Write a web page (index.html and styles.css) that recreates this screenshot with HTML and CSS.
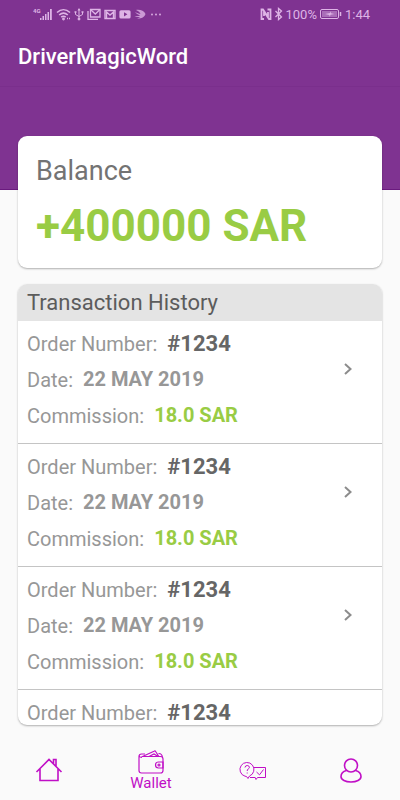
FILE: index.html
```html
<!DOCTYPE html>
<html lang="en">
<head>
<meta charset="UTF-8" />
<meta name="viewport" content="width=device-width, initial-scale=1"/>
<title>DriverMagicWord</title>
<link rel="stylesheet" href="styles.css">
</head>
<body>
  <header class="hero">
    <div class="status-bar">
      <div class="status-left">
        <svg width="20" height="14" viewBox="0 0 20 14" fill="currentColor"><text class="net" x="0" y="6">4G</text><path d="M7 11h1.500v2h-1.500zM9.500 9h1.500v4H9.500zM12 7h1.500v6H12zM14.500 5H16v8h-1.500zM17 2h1.800v11H17z"/></svg>
        <svg width="15" height="14" viewBox="0 0 15 14" fill="none" stroke="currentColor" stroke-width="1.600"><path d="M1 5.500C5 1.800 10 1.800 14 5.500M3.200 8C6 5.500 9 5.500 11.800 8M5.200 10.200c1.500-1.200 3-1.200 4.500 0"/><circle cx="7.500" cy="12" r=".6"/><path d="M11 11.500h3" stroke-dasharray="1 1"/></svg>
        <svg width="10" height="14" viewBox="0 0 10 14" fill="none" stroke="currentColor"><path d="M5 2v10M1.500 5v2.500L5 9.500l3.500-2V5"/><path d="M5 1l1.500 2.500h-3z" fill="currentColor" stroke="none"/><circle cx="5" cy="12" r="1" fill="currentColor"/><path d="M.5 5h2M7.500 5h2" stroke-width="1.500"/></svg>
        <svg width="14" height="14" viewBox="0 0 14 14" fill="none" stroke="currentColor" stroke-width="1.300"><path d="M1 4v8.300h10M3.500 2.500h9.500v7.500H3.500z"/><path d="M4 3l4.300 4L12.500 3"/></svg>
        <svg width="12" height="14" viewBox="0 0 12 14" fill="none" stroke="currentColor" stroke-width="1.400"><path d="M1 3.500h10v8H1z"/><path d="M2.500 11V5L6 8l3.500-3v6"/></svg>
        <svg width="12" height="14" viewBox="0 0 12 14" fill="currentColor" fill-rule="evenodd"><path d="M2 3.200h8q1.600 0 1.600 1.500v5.200q0 1.500-1.600 1.500H2Q.4 11.400.4 9.900V4.700Q.4 3.200 2 3.200zM5 5.200v4.200l3.400-2.100z"/></svg>
        <svg width="12" height="14" viewBox="0 0 12 14" fill="currentColor"><path d="M2 3c4-.6 8 .6 9.500 4-1 3.500-5 5-9 4.500 2-.5 3-1 3.500-1.500-2 .3-4 0-5.500-1 2.500.2 4.500 0 5.500-.8C4 8 2 6.500 1 5c2 1.200 4 1.800 5.500 1.800C5.500 5 4 3.800 2 3z" fill-opacity=".8"/></svg>
        <svg width="12" height="14" viewBox="0 0 12 14" fill="currentColor"><circle cx="3" cy="7.500" r=".9"/><circle cx="7" cy="7.500" r=".9"/><circle cx="11" cy="7.500" r=".9"/></svg>
      </div>
      <div class="status-right">
        <svg width="12" height="14" viewBox="0 0 12 14" fill="none" stroke="currentColor" stroke-width="1.800"><path d="M4 12H1.500V2.500H3l5 7.500V5M7.500 2.500h3V12H9L4 4.500V9"/></svg>
        <svg width="9" height="14" viewBox="0 0 9 14" fill="none" stroke="currentColor" stroke-width="1.300"><path d="M1.500 4l6 6L4.500 12.500V1.500L7.500 4l-6 6"/></svg>
        <span>100%</span>
        <svg class="battery" width="22" height="14" viewBox="0 0 22 14" fill="none" stroke="currentColor"><rect x=".5" y="2.500" width="18" height="9" rx="1.500"/><rect x="2" y="4" width="15" height="6" fill="currentColor" fill-opacity=".45" stroke="none"/><path d="M20.500 5v4" stroke-width="1.500"/><path d="M5 7l5-1 .5-1.700.5 1.900 3.500.8-4 .8-.7 1.900-.6-1.700z" fill="currentColor" stroke="none"/></svg>
        <time>1:44</time>
      </div>
    </div>
    <h1 class="app-title">DriverMagicWord</h1>
  </header>

  <main class="content">
    <section class="card balance">
      <h2 class="balance-label">Balance</h2>
      <p class="balance-amount">+400000 SAR</p>
    </section>

    <section class="card history">
      <h2 class="history-title">Transaction History</h2>
      <ul class="orders">
        <li class="order">
          <dl class="order-info">
            <div class="line"><dt>Order Number:</dt><dd class="number">#1234</dd></div>
            <div class="line"><dt>Date:</dt><dd>22 MAY 2019</dd></div>
            <div class="line"><dt>Commission:</dt><dd class="money">18.0 SAR</dd></div>
          </dl>
          <button class="open" aria-label="Open order"><svg width="10" height="14" viewBox="0 0 10 14"><path d="M2 2l5.500 5L2 12"/></svg></button>
        </li>
        <li class="order">
          <dl class="order-info">
            <div class="line"><dt>Order Number:</dt><dd class="number">#1234</dd></div>
            <div class="line"><dt>Date:</dt><dd>22 MAY 2019</dd></div>
            <div class="line"><dt>Commission:</dt><dd class="money">18.0 SAR</dd></div>
          </dl>
          <button class="open" aria-label="Open order"><svg width="10" height="14" viewBox="0 0 10 14"><path d="M2 2l5.500 5L2 12"/></svg></button>
        </li>
        <li class="order">
          <dl class="order-info">
            <div class="line"><dt>Order Number:</dt><dd class="number">#1234</dd></div>
            <div class="line"><dt>Date:</dt><dd>22 MAY 2019</dd></div>
            <div class="line"><dt>Commission:</dt><dd class="money">18.0 SAR</dd></div>
          </dl>
          <button class="open" aria-label="Open order"><svg width="10" height="14" viewBox="0 0 10 14"><path d="M2 2l5.500 5L2 12"/></svg></button>
        </li>
        <li class="order">
          <dl class="order-info">
            <div class="line"><dt>Order Number:</dt><dd class="number">#1234</dd></div>
          </dl>
        </li>
      </ul>
    </section>
  </main>

  <nav class="tabs" aria-label="Main">
    <a class="tab" href="#home" aria-label="Home">
      <svg width="28" height="26" viewBox="0 0 28 26" stroke-width="1.600"><path d="M1.500 14L14 1.500 26.500 14M5 11v11.500h18V11M18.500 6V1.500h2.500v7"/></svg>
    </a>
    <a class="tab active" href="#wallet" aria-current="page">
      <svg width="26" height="24" viewBox="0 0 26 24" stroke-width="1.200"><path d="M3.500 6.500h19q2.500 0 2.500 2.500v11.500q0 2.500-2.500 2.500h-19Q1 23 1 20.500V6.500Q1 4 3.500 4H7M1 6q1 1.500 3 1.500M4.500 6.500L16 1.200q1.200-.6 1.800.5l3 4.800M11 6.500l5-2.500 4 2.500M20.500 3.500q3.500-.2 4 4"/><path d="M25 12h-4.500a3 3 0 0 0 0 6H25z"/><circle cx="21" cy="15" r="1"/></svg>
      <span>Wallet</span>
    </a>
    <a class="tab" href="#support" aria-label="Support">
      <svg width="28" height="20" viewBox="0 0 28 20" stroke-width="1"><path d="M6 15.200A7 7 0 1 1 10.500 15L9 17.500 7.500 15.500z"/><path d="M6 6.500q.2-2 2.200-2t2.200 1.800q0 1-1.200 1.700Q8.200 8.600 8.200 10M8.200 11.500v1"/><path d="M15 6.500h11.500v10H18.500L17 18.500l-.8-2H11"/><path d="M17.500 11l3 2.800L24.500 8.500"/></svg>
    </a>
    <a class="tab" href="#profile" aria-label="Profile">
      <svg width="24" height="26" viewBox="0 0 24 26" stroke-width="1.600"><circle cx="12" cy="7.500" r="6.500"/><path d="M7.500 12.500C3.500 13.500 2 16 2 18.500 2 22 6.500 24 12 24s10-2 10-5.500c0-2.500-1.500-5-5.500-6"/></svg>
    </a>
  </nav>
</body>
</html>
```
FILE: styles.css
```css
* {
  box-sizing: border-box;
}
body {
  margin: 0;
  height: 100vh;
  display: flex;
  flex-direction: column;
  font-family: Roboto, sans-serif;
  background: #fafafa;
  color: #737373;
}
h1, h2, p, ul, dl, dd {
  margin: 0;
  padding: 0;
}

/* Purple header */
.hero {
  flex-shrink: 0;
  height: 190px;
  background: #7f3391;
  border-bottom: 1px solid #6a1a7e;
  color: #fff;
}
.status-bar {
  height: 28px;
  padding: 0 30px 0 33px;
  display: flex;
  justify-content: space-between;
  align-items: center;
  font-size: 13px;
  color: #deb4e6;
}
.status-left,
.status-right {
  display: flex;
  align-items: center;
}
.status-left {
  gap: 3px;
}
.status-right {
  gap: 2px;
}
.battery {
  margin: 0 1px;
}
.net {
  font-size: 6px;
  font-weight: 700;
}
.app-title {
  padding: 0 18px;
  line-height: 58px;
  font-size: 22px;
  font-weight: 500;
  border-bottom: 1px solid #7a2f8c;
}

/* Cards */
.content {
  flex: 1;
  min-height: 0;
  margin-top: -54px;
  padding: 0 18px 19px;
  display: flex;
  flex-direction: column;
  gap: 16px;
}
.card {
  background: #fff;
  border-radius: 9px;
  box-shadow: 0 1px 2px rgba(0, 0, 0, 0.3);
}
.balance {
  flex-shrink: 0;
  height: 132px;
  padding: 16px 18px;
}
.balance-label {
  font-size: 27px;
  line-height: 38px;
  font-weight: 400;
}
.balance-amount {
  font-size: 44px;
  line-height: 72px;
  font-weight: 700;
  color: #99cc44;
}
.history {
  flex: 1;
  min-height: 0;
  overflow: hidden;
}
.history-title {
  padding: 0 9px;
  font-size: 22px;
  line-height: 37px;
  font-weight: 400;
  color: #5c5c5c;
  background: #e4e4e4;
}

/* Orders */
.orders {
  list-style: none;
}
.order {
  display: flex;
  justify-content: space-between;
  align-items: flex-start;
  padding: 5px 24px 9px 9px;
  border-bottom: 1px solid #c4c4c4;
}
.line {
  display: flex;
  gap: 10px;
  font-size: 20px;
  line-height: 36px;
}
.line dt {
  color: #979797;
}
.line dd {
  font-weight: 700;
  line-height: 34px;
  color: #979797;
}
.line .number {
  font-size: 22px;
  line-height: 36px;
  color: #666;
}
.line .money {
  color: #99cc44;
}
.open {
  width: 20px;
  height: 32px;
  margin-top: 27px;
  padding: 0;
  border: none;
  background: none;
  cursor: pointer;
}
.open svg {
  display: block;
  margin: auto;
  fill: none;
  stroke: #8c8c8c;
  stroke-width: 2;
}

/* Bottom navigation */
.tabs {
  flex-shrink: 0;
  height: 56px;
  padding-bottom: 2px;
  display: flex;
}
.tab {
  flex: 1;
  display: flex;
  flex-direction: column;
  align-items: center;
  justify-content: center;
  color: #c00fc6;
  font-size: 15px;
  line-height: 18px;
  text-decoration: none;
}
.tab.active {
  flex: 0 0 106px;
}
.tab svg {
  fill: none;
  stroke: currentColor;
}
```
